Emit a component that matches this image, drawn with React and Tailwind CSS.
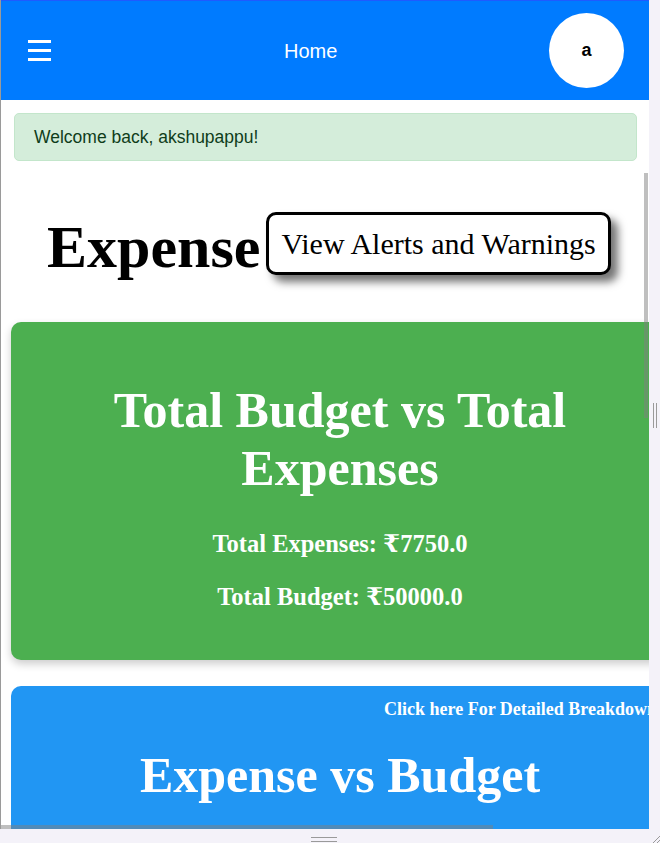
import React from "react";

const serif = { fontFamily: '"Liberation Serif", "Times New Roman", "DejaVu Serif", serif' };

export default function App() {
  return (
    <div
      className="w-[660px] h-[843px] bg-[#f4f2f9] flex flex-col overflow-hidden"
      style={{ fontFamily: '"Liberation Sans", Arial, sans-serif' }}
    >
      <div className="flex h-[829px]">
        {/* viewport */}
        <div className="relative w-[649px] h-[829px] border-l border-[#9a9a9a] bg-white overflow-hidden shrink-0">
          {/* header */}
          <div className="h-[100px] bg-[#007bff] border-t border-[#1f5bff] flex items-center">
            <div className="ml-[27px] w-[23px] flex flex-col gap-[6px]">
              <div className="h-[3px] bg-white" />
              <div className="h-[3px] bg-white" />
              <div className="h-[3px] bg-white" />
            </div>
            <div className="ml-[233px] text-white text-[20px] leading-[24px]">Home</div>
            <div className="ml-auto mr-[25px] w-[75px] h-[75px] rounded-full bg-white flex items-center justify-center text-black font-bold text-[18px]">
              a
            </div>
          </div>

          {/* alert */}
          <div className="mt-[13px] ml-[13px] w-[623px] h-[48px] rounded-[5px] bg-[#d4edda] border border-[#c3e6cb] text-[#0f3d1a] text-[17.5px] pl-[19px] flex items-center">
            Welcome back, akshupappu!
          </div>

          {/* title row */}
          <div className="mt-[51px] flex items-start pl-[46px] gap-[6px]" style={serif}>
            <h1 className="text-[60px] leading-[70px] font-bold text-black">Expense</h1>
            <button
              className="h-[63px] px-[12px] border-[3px] border-black rounded-[10px] bg-white text-[30px] leading-[57px] text-black shadow-[7px_7px_9px_rgba(0,0,0,0.55)] whitespace-nowrap"
              style={serif}
            >
              View Alerts and Warnings
            </button>
          </div>

          {/* green card */}
          <div
            className="mt-[40px] ml-[10px] w-[658px] h-[338px] rounded-[10px] bg-[#4caf50] text-white text-center pt-[59px] shadow-[0_4px_8px_rgba(0,0,0,0.2)]"
            style={serif}
          >
            <h2 className="text-[50px] leading-[58px] font-bold px-[60px]">Total Budget vs Total Expenses</h2>
            <p className="mt-[33px] text-[24.5px] leading-[28px] font-bold">Total Expenses: ₹7750.0</p>
            <p className="mt-[25px] text-[24.5px] leading-[28px] font-bold">Total Budget: ₹50000.0</p>
          </div>

          {/* blue card */}
          <div
            className="mt-[26px] ml-[10px] w-[658px] h-[300px] rounded-[10px] bg-[#2196f3] text-white pt-[13px]"
            style={serif}
          >
            <div className="text-right pr-[12px] text-[18px] leading-[20px] font-bold whitespace-nowrap">
              Click here For Detailed Breakdown
            </div>
            <h2 className="mt-[27px] text-center text-[50px] leading-[58px] font-bold">Expense vs Budget</h2>
          </div>

          {/* overlay scrollbars */}
          <div className="absolute left-[643px] top-[173px] w-[4px] h-[245px] bg-[rgba(128,128,128,0.5)]" />
          <div className="absolute left-0 top-[825px] w-[492px] h-[4px] bg-[rgba(128,128,128,0.5)]" />
        </div>

        {/* right strip */}
        <div className="flex-1 flex items-center justify-center">
          <div className="flex gap-[2px] h-[25px] mt-[1px]">
            <div className="w-[1px] h-full bg-[#9a9a9a]" />
            <div className="w-[1px] h-full bg-[#9a9a9a]" />
          </div>
        </div>
      </div>

      {/* bottom strip */}
      <div className="relative h-[14px] flex justify-center">
        <div className="ml-[-12px] mt-[8px] w-[26px] flex flex-col gap-[3px]">
          <div className="h-[1px] bg-[#9a9a9a]" />
          <div className="h-[1px] bg-[#9a9a9a]" />
        </div>
        <svg className="absolute right-0 bottom-0" width="8" height="8" viewBox="0 0 8 8">
          <line x1="8" y1="1" x2="1" y2="8" stroke="#9a9a9a" strokeWidth="1" />
          <line x1="8" y1="5" x2="5" y2="8" stroke="#9a9a9a" strokeWidth="1" />
        </svg>
      </div>
    </div>
  );
}
